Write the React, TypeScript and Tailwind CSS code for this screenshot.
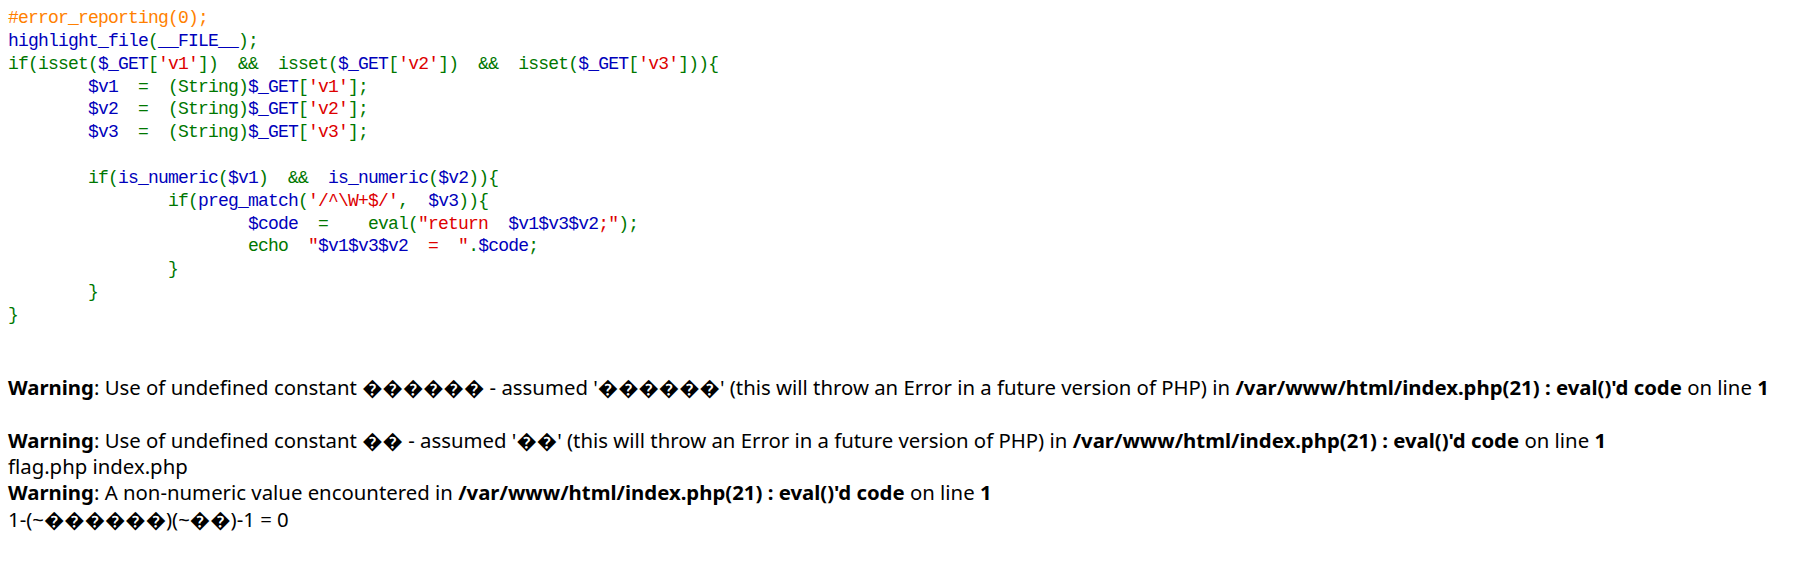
import React from "react";

// PHP highlight_file colours
const C = {
  comment: "text-[#FF8000]",
  default: "text-[#0000BB]",
  keyword: "text-[#007700]",
  string: "text-[#DD0000]",
};

type Seg = [keyof typeof C, string];

const sp = (n: number) => "\u00a0".repeat(n);

const codeLines: Seg[][] = [
  [["comment", "#error_reporting(0);"]],
  [
    ["default", "highlight_file"],
    ["keyword", "("],
    ["default", "__FILE__"],
    ["keyword", ");"],
  ],
  [
    ["keyword", "if(isset("],
    ["default", "$_GET"],
    ["keyword", "["],
    ["string", "'v1'"],
    ["keyword", `])${sp(2)}&&${sp(2)}isset(`],
    ["default", "$_GET"],
    ["keyword", "["],
    ["string", "'v2'"],
    ["keyword", `])${sp(2)}&&${sp(2)}isset(`],
    ["default", "$_GET"],
    ["keyword", "["],
    ["string", "'v3'"],
    ["keyword", "])){"],
  ],
  [
    ["default", `${sp(8)}$v1${sp(2)}`],
    ["keyword", `=${sp(2)}(String)`],
    ["default", "$_GET"],
    ["keyword", "["],
    ["string", "'v1'"],
    ["keyword", "];"],
  ],
  [
    ["default", `${sp(8)}$v2${sp(2)}`],
    ["keyword", `=${sp(2)}(String)`],
    ["default", "$_GET"],
    ["keyword", "["],
    ["string", "'v2'"],
    ["keyword", "];"],
  ],
  [
    ["default", `${sp(8)}$v3${sp(2)}`],
    ["keyword", `=${sp(2)}(String)`],
    ["default", "$_GET"],
    ["keyword", "["],
    ["string", "'v3'"],
    ["keyword", "];"],
  ],
  [["default", sp(1)]],
  [
    ["default", sp(8)],
    ["keyword", "if("],
    ["default", "is_numeric"],
    ["keyword", "("],
    ["default", "$v1"],
    ["keyword", `)${sp(2)}&&${sp(2)}`],
    ["default", "is_numeric"],
    ["keyword", "("],
    ["default", "$v2"],
    ["keyword", ")){"],
  ],
  [
    ["default", sp(16)],
    ["keyword", "if("],
    ["default", "preg_match"],
    ["keyword", "("],
    ["string", "'/^\\W+$/'"],
    ["keyword", `,${sp(2)}`],
    ["default", "$v3"],
    ["keyword", ")){"],
  ],
  [
    ["default", `${sp(24)}$code${sp(2)}`],
    ["keyword", `=${sp(4)}eval(`],
    ["string", `"return${sp(2)}`],
    ["default", "$v1$v3$v2"],
    ["string", ';"'],
    ["keyword", ");"],
  ],
  [
    ["default", sp(24)],
    ["keyword", `echo${sp(2)}`],
    ["string", '"'],
    ["default", "$v1$v3$v2"],
    ["string", `${sp(2)}=${sp(2)}"`],
    ["keyword", "."],
    ["default", "$code"],
    ["keyword", ";"],
  ],
  [["keyword", `${sp(16)}}`]],
  [["keyword", `${sp(8)}}`]],
  [["keyword", "}"]],
];

const bad = (n: number) => "\uFFFD".repeat(n);

const Where = () => (
  <>
    {" in "}
    <b>/var/www/html/index.php(21) : eval()'d code</b>
    {" on line "}
    <b>1</b>
  </>
);

export default function App() {
  return (
    <div className="min-h-screen bg-white px-2 pt-[7px]">
      <code className="block font-['Liberation_Mono',monospace] text-[18px] leading-[22.85px] tracking-[-0.8px] whitespace-nowrap">
        {codeLines.map((line, i) => (
          <div key={i}>
            {line.map(([kind, text], j) => (
              <span key={j} className={C[kind]}>
                {text}
              </span>
            ))}
          </div>
        ))}
      </code>

      <div className="mt-[47px] font-['Noto_Sans',sans-serif] text-[20.35px] leading-[26.4px] text-black whitespace-nowrap">
        <div>
          <b>Warning</b>: Use of undefined constant {bad(6)} - assumed '{bad(6)}' (this will throw an Error in a
          future version of PHP)
          <Where />
        </div>
        <div>{"\u00a0"}</div>
        <div>
          <b>Warning</b>: Use of undefined constant {bad(2)} - assumed '{bad(2)}' (this will throw an Error in a
          future version of PHP)
          <Where />
        </div>
        <div>flag.php index.php</div>
        <div>
          <b>Warning</b>: A non-numeric value encountered
          <Where />
        </div>
        <div>1-(~{bad(6)})(~{bad(2)})-1 = 0</div>
      </div>
    </div>
  );
}
